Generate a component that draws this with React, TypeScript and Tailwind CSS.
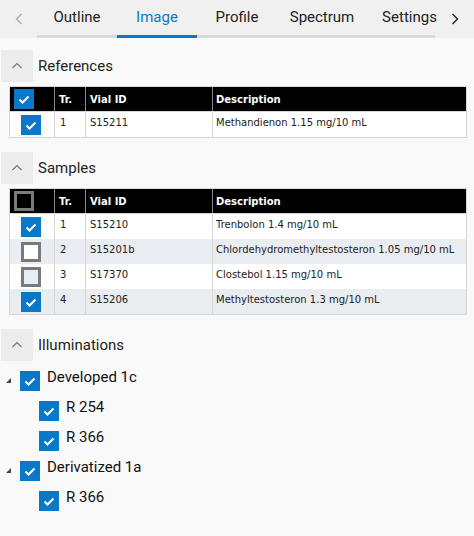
import React from "react";

const Check = () => (
  <svg width="20" height="20" viewBox="0 0 20 20" className="block">
    <polyline points="5.5,10.5 8.5,13.5 14.5,7.5" fill="none" stroke="white" strokeWidth="2" />
  </svg>
);

const Box = ({ checked, fill = "bg-white", dark = false }: { checked: boolean; fill?: string; dark?: boolean }) =>
  checked ? (
    <div className="w-5 h-5 bg-[#0a78c8]">
      <Check />
    </div>
  ) : (
    <div className={`w-5 h-5 border-[3px] border-[#7a7a7a] ${dark ? "bg-black" : fill}`} />
  );

const Caret = () => (
  <div className="w-8 h-8 bg-[#ececec] flex items-center justify-center">
    <svg width="12" height="8" viewBox="0 0 12 8">
      <polyline points="1.5,6 6,1.5 10.5,6" fill="none" stroke="#777" strokeWidth="1.2" />
    </svg>
  </div>
);

const Section = ({ title }: { title: string }) => (
  <div className="flex items-center pl-px">
    <Caret />
    <span className="ml-[5px] text-[15px] text-[#222] leading-none">{title}</span>
  </div>
);

type Row = { tr: string; id: string; desc: string; checked: boolean; bg: string; box?: string };

const Table = ({ rows, headerChecked }: { rows: Row[]; headerChecked: boolean }) => (
  <div className="ml-[9px] w-[458px] border border-[#d6d6d6] font-['DejaVu_Sans',sans-serif] text-[10px]">
    <div className="flex h-[25px] bg-black text-white font-bold border-b border-[#d6d6d6]">
      <div className="w-[45px] flex items-center pl-[4px] border-r border-[#888]">
        <Box checked={headerChecked} dark />
      </div>
      <div className="w-[31px] pl-[4px] pt-[5px] border-r border-[#888]">Tr.</div>
      <div className="w-[127px] pl-[4px] pt-[5px] border-r border-[#888]">Vial ID</div>
      <div className="flex-1 pl-[3px] pt-[5px]">Description</div>
    </div>
    {rows.map((r, i) => (
      <div key={i} className={`flex h-[25px] ${r.bg} text-[#222]`}>
        <div className="w-[45px] flex items-center justify-center pr-[3px] border-r border-[#d6d6d6]">
          <Box checked={r.checked} fill={r.box} />
        </div>
        <div className="w-[31px] pl-[5px] pt-[3px] border-r border-[#d6d6d6]">{r.tr}</div>
        <div className="w-[127px] pl-[4px] pt-[3px] border-r border-[#d6d6d6]">{r.id}</div>
        <div className="flex-1 pl-[3px] pt-[3px]">{r.desc}</div>
      </div>
    ))}
  </div>
);

const TreeItem = ({ label, level }: { label: string; level: number }) => (
  <div className="flex items-center h-[30px]" style={{ paddingLeft: level === 0 ? 5 : 39 }}>
    {level === 0 && (
      <svg width="15" height="10" viewBox="0 0 15 10">
        <polygon points="1,7 6,7 6,2" fill="#444" />
      </svg>
    )}
    <Box checked />
    <span className="ml-[7px] text-[15px] text-[#111] leading-none -mt-[8px]">{label}</span>
  </div>
);

export default function App() {
  const tabs = [
    { t: "Outline", w: 80 },
    { t: "Image", w: 80 },
    { t: "Profile", w: 80 },
    { t: "Spectrum", w: 90 },
    { t: "Settings", w: 68 },
  ];
  return (
    <div className="w-[474px] h-[536px] bg-[#f9f9f9] font-['Roboto',sans-serif] overflow-hidden">
      <div className="h-[38px] bg-[#f0f0f0] flex items-stretch">
        <div className="w-[37px] flex items-center justify-center">
          <svg width="8" height="12" viewBox="0 0 8 12">
            <polyline points="6.5,1 1.5,6 6.5,11" fill="none" stroke="#aaa" strokeWidth="1.4" />
          </svg>
        </div>
        {tabs.map((tab) => (
          <div
            key={tab.t}
            className={`flex items-center justify-center border-b-[3px] text-[15px] ${
              tab.t === "Image" ? "border-[#0a78c8] text-[#0a78c8]" : "border-[#d9d9d9] text-[#222]"
            }`}
            style={{ width: tab.w }}
          >
            {tab.t === "Settings" ? <span className="ml-[17px] whitespace-nowrap">{tab.t}</span> : tab.t}
          </div>
        ))}
        <div className="flex-1 flex items-center justify-center">
          <svg width="8" height="12" viewBox="0 0 8 12">
            <polyline points="1.5,1 6.5,6 1.5,11" fill="none" stroke="#222" strokeWidth="1.4" />
          </svg>
        </div>
      </div>

      <div className="pt-[12px]">
        <Section title="References" />
        <div className="mt-[4px]">
          <Table
            headerChecked
            rows={[{ tr: "1", id: "S15211", desc: "Methandienon 1.15 mg/10 mL", checked: true, bg: "bg-white" }]}
          />
        </div>

        <div className="mt-[14px]">
          <Section title="Samples" />
        </div>
        <div className="mt-[4px]">
          <Table
            headerChecked={false}
            rows={[
              { tr: "1", id: "S15210", desc: "Trenbolon 1.4 mg/10 mL", checked: true, bg: "bg-white" },
              { tr: "2", id: "S15201b", desc: "Chlordehydromethyltestosteron 1.05 mg/10 mL", checked: false, bg: "bg-[#e9ecf0]", box: "bg-white" },
              { tr: "3", id: "S17370", desc: "Clostebol 1.15 mg/10 mL", checked: false, bg: "bg-white", box: "bg-[#e6edf5]" },
              { tr: "4", id: "S15206", desc: "Methyltestosteron 1.3 mg/10 mL", checked: true, bg: "bg-[#e9ecf0]" },
            ]}
          />
        </div>

        <div className="mt-[14px]">
          <Section title="Illuminations" />
        </div>
        <div className="mt-[5px]">
          <TreeItem label="Developed 1c" level={0} />
          <TreeItem label="R 254" level={1} />
          <TreeItem label="R 366" level={1} />
          <TreeItem label="Derivatized 1a" level={0} />
          <TreeItem label="R 366" level={1} />
        </div>
      </div>
    </div>
  );
}
